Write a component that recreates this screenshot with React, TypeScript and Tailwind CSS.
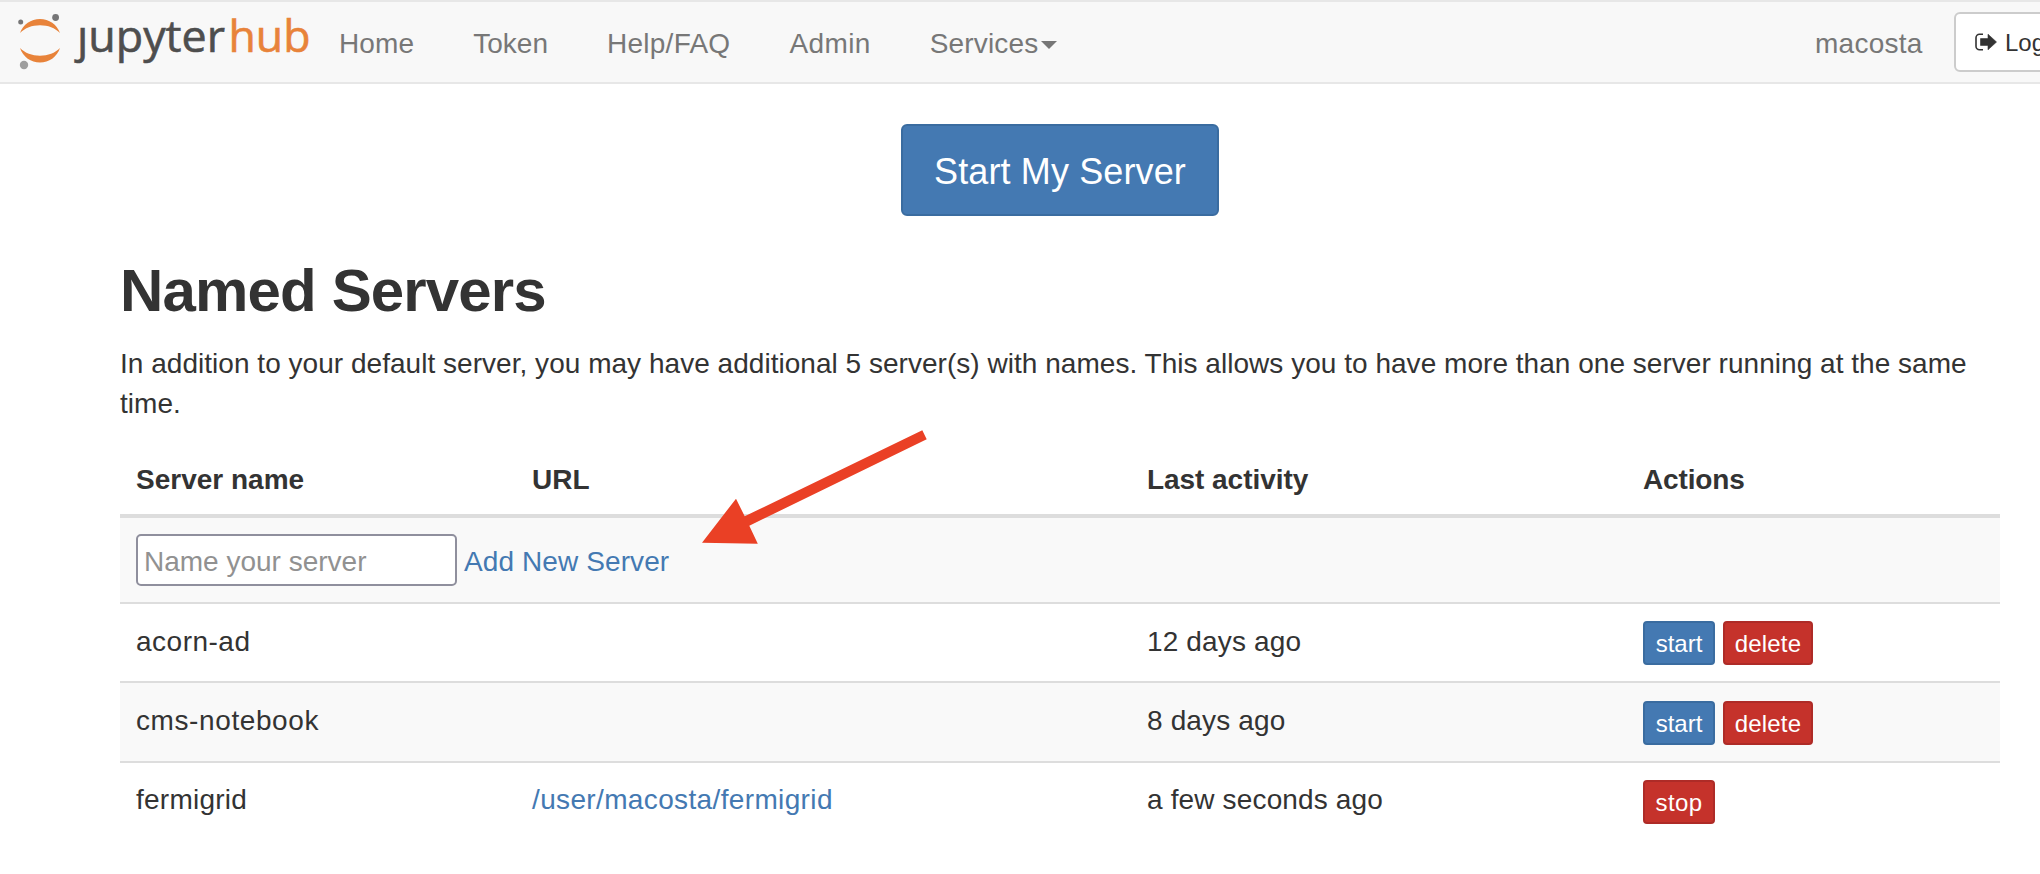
import React from "react";

function Logo() {
  return (
    <svg className="block h-[80px] w-[320px] shrink-0" viewBox="0 2 320 80">
      <path d="M20 33C23 24.500 31 19 40 19S57 24.500 60 33C55 28 48 25.300 40 25.300S25 28 20 33Z" fill="#e8833a" />
      <path d="M20 48C23 57 31 62.500 40 62.500S57 57 60 48C55 53 48 55.700 40 55.700S25 53 20 48Z" fill="#e8833a" />
      <circle cx="20.700" cy="22" r="2.500" fill="#767677" />
      <circle cx="55.600" cy="17.500" r="3.400" fill="#767677" />
      <circle cx="24" cy="65" r="4.200" fill="#9e9e9e" />
      <text x="77" y="52" textLength="148" lengthAdjust="spacingAndGlyphs" fill="#4e4e4e" stroke="#4e4e4e" strokeWidth=".6" className="font-['Open_Sans',sans-serif] text-[44px]">ȷupyter</text>
      <text x="228.500" y="52" textLength="82" lengthAdjust="spacingAndGlyphs" fill="#e8833a" stroke="#e8833a" strokeWidth=".6" className="font-['Open_Sans',sans-serif] text-[44px]">hub</text>
    </svg>
  );
}

function SignOutIcon() {
  return (
    <svg className="block h-[20px] w-[24px] shrink-0" viewBox="0 0 24 20">
      <path d="M9 2.200H5.500A3.500 3.500 0 0 0 2 5.700v8.600a3.500 3.500 0 0 0 3.500 3.500H9" fill="none" stroke="#333" strokeWidth="1.600" />
      <path d="M6.500 6.600h7.500V2.200L22.500 10 14 17.800V13.400H6.500Z" fill="#333" stroke="#333" strokeWidth=".6" strokeLinejoin="round" />
    </svg>
  );
}

// Annotation arrow laid over the table, pointing at the "Add New Server" link.
function Arrow() {
  return (
    <svg className="pointer-events-none absolute left-[700px] top-[428px] h-[118px] w-[230px]" viewBox="700 428 230 118">
      <path d="M702 542.700 736 498.700 744.700 516.300 922.300 430.200 926.700 439.300 749.300 525.700 757.800 543.700Z" fill="#ea4025" />
    </svg>
  );
}

const links = [
  { label: "Home", style: "tracking-[0.15px]" },
  { label: "Token", style: "" },
  { label: "Help/FAQ", style: "tracking-[0.25px]" },
  { label: "Admin", style: "tracking-[0.4px]" },
];

function Navbar() {
  return (
    <nav className="flex h-[84px] items-center overflow-hidden border-y-2 border-[#e7e7e7] bg-[#f8f8f8] text-[28px] leading-[40px] text-[#777]">
      <Logo />
      <div className="ml-[19px] flex grow items-center gap-[59px] pt-[4px]">
        {links.map((l) => (
          <a key={l.label} href="#" className={l.style}>{l.label}</a>
        ))}
        <a href="#" className="flex items-center">
          <span className="tracking-[0.15px]">Services</span>
          <span className="ml-[3px] mt-[2px] border-x-8 border-t-8 border-x-transparent border-t-[#777]" />
        </a>
      </div>
      <span className="w-[139px] shrink-0 pt-[4px] tracking-[0.25px]">macosta</span>
      <div className="w-[86px] shrink-0">
        <button className="flex h-[60px] w-[140px] items-center rounded-[6px] border-2 border-[#ccc] bg-white pl-[18px] text-[24px] text-[#333]">
          <SignOutIcon />
          <span className="ml-[7px] pt-[2px]">Logout</span>
        </button>
      </div>
    </nav>
  );
}

const buttonColors = {
  start: "border-[#3a6ca0] bg-[#4479b2]",
  delete: "border-[#ae2b27] bg-[#c5322b]",
  stop: "border-[#ae2b27] bg-[#c5322b]",
};
const buttonSizes = {
  start: "w-[72px]",
  delete: "w-[90px] tracking-[0.15px]",
  stop: "w-[72px] tracking-[0.4px]",
};

type Action = keyof typeof buttonColors;

type Server = {
  name: string;
  nameStyle: string;
  url: string;
  activity: string;
  actions: Action[];
  row: string;
  actionsStyle: string;
};

const servers: Server[] = [
  { name: "acorn-ad", nameStyle: "tracking-[0.5px]", url: "", activity: "12 days ago", actions: ["start", "delete"], row: "h-[79px] pt-[18px] bg-white", actionsStyle: "-mt-[1px] leading-[38px]" },
  { name: "cms-notebook", nameStyle: "tracking-[0.6px]", url: "", activity: "8 days ago", actions: ["start", "delete"], row: "h-[80px] pt-[18px] bg-[#f9f9f9]", actionsStyle: "leading-[36px]" },
  { name: "fermigrid", nameStyle: "tracking-[0.25px]", url: "/user/macosta/fermigrid", activity: "a few seconds ago", actions: ["stop"], row: "h-[80px] pt-[17px] bg-white", actionsStyle: "leading-[36px]" },
];

const columns = "grid grid-cols-[396px_615px_496px_1fr] px-[16px]";

export default function App() {
  return (
    <div className="relative h-[874px] overflow-hidden bg-white font-['Liberation_Sans',Arial,sans-serif] text-[28px] leading-[40px] text-[#333]">
      <Navbar />
      <main className="ml-[120px] w-[1880px] pt-[40px]">
        <div className="flex justify-center">
          <button className="h-[92px] w-[318px] rounded-[6px] border-2 border-[#3a6ca0] bg-[#4479b2] pt-[3px] text-[36px] leading-[48px] tracking-[0.12px] text-white">
            Start My Server
          </button>
        </div>
        <h2 className="mt-[42px] h-[66px] text-[60px] font-bold leading-[66px] tracking-[-0.85px]">Named Servers</h2>
        <p className="mt-[20px] tracking-[0.03px]">
          In addition to your default server, you may have additional 5 server(s) with names. This allows you to have more than one server running at the same time.
        </p>
        <div className="mt-[19px]">
          <div className={`${columns} h-[75px] border-b-4 border-[#ddd] pt-[17px] font-bold`}>
            <span>Server name</span>
            <span>URL</span>
            <span className="tracking-[-0.05px]">Last activity</span>
            <span className="tracking-[-0.15px]">Actions</span>
          </div>
          <div className="flex h-[84px] items-center bg-[#f9f9f9] px-[16px]">
            <input
              placeholder="Name your server"
              className="h-[52px] w-[321px] rounded-[5px] border-2 border-[#8f8f9d] bg-white pl-[6px] pt-[4px] placeholder:text-[#919191]"
            />
            <a href="#" className="ml-[7px] pt-[4px] tracking-[0.1px] text-[#4479b2]">Add New Server</a>
          </div>
          {servers.map((s) => (
            <div key={s.name} className={`${columns} ${s.row} border-t-2 border-[#ddd]`}>
              <span className={s.nameStyle}>{s.name}</span>
              <a href="#" className="tracking-[0.36px] text-[#4479b2]">{s.url}</a>
              <span className="tracking-[0.15px]">{s.activity}</span>
              <div className={`flex gap-[8px] ${s.actionsStyle}`}>
                {s.actions.map((a) => (
                  <button
                    key={a}
                    className={`h-[44px] rounded-[4px] border-2 pt-[1px] text-center text-[24px] text-white ${buttonColors[a]} ${buttonSizes[a]}`}
                  >
                    {a}
                  </button>
                ))}
              </div>
            </div>
          ))}
        </div>
      </main>
      <Arrow />
    </div>
  );
}
